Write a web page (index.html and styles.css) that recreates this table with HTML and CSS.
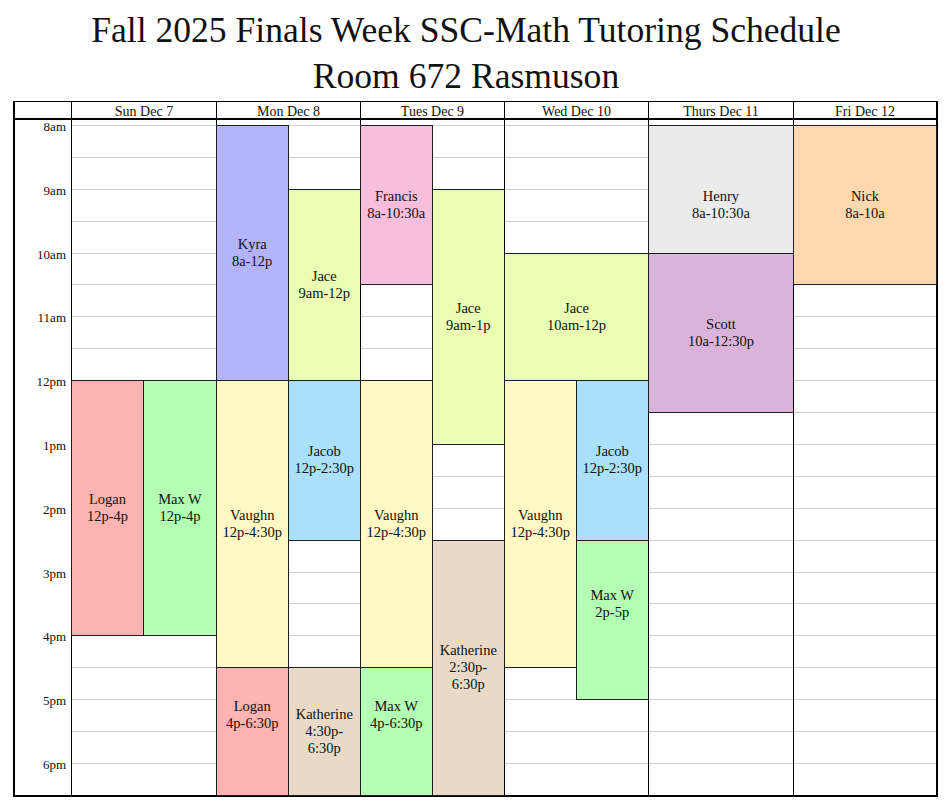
FILE: index.html
```html
<!DOCTYPE html>
<html>
<head>
<meta charset="utf-8">
<link rel="stylesheet" href="styles.css">
</head>
<body>
<h1 class="title">Fall 2025 Finals Week SSC-Math Tutoring Schedule<br>Room 672 Rasmuson</h1>
<div class="sched">
  <div class="hcell first"></div>
  <div class="hcell">Sun Dec 7</div>
  <div class="hcell">Mon Dec 8</div>
  <div class="hcell">Tues Dec 9</div>
  <div class="hcell">Wed Dec 10</div>
  <div class="hcell">Thurs Dec 11</div>
  <div class="hcell">Fri Dec 12</div>

  <div class="times">
    <div class="tl">8am</div>
    <div class="tl">9am</div>
    <div class="tl">10am</div>
    <div class="tl">11am</div>
    <div class="tl">12pm</div>
    <div class="tl">1pm</div>
    <div class="tl">2pm</div>
    <div class="tl">3pm</div>
    <div class="tl">4pm</div>
    <div class="tl">5pm</div>
    <div class="tl">6pm</div>
  </div>

  <div class="col">
    <div class="ev c1 logan" style="grid-row: 9 / 17">Logan<br>12p-4p</div>
    <div class="ev c2 end maxw" style="grid-row: 9 / 17">Max W<br>12p-4p</div>
  </div>

  <div class="col">
    <div class="ev c1 kyra" style="grid-row: 1 / 9">Kyra<br>8a-12p</div>
    <div class="ev c2 end jace" style="grid-row: 3 / 9">Jace<br>9am-12p</div>
    <div class="ev c1 vaughn" style="grid-row: 9 / 18">Vaughn<br>12p-4:30p</div>
    <div class="ev c2 end jacob" style="grid-row: 9 / 14">Jacob<br>12p-2:30p</div>
    <div class="ev c1 up logan" style="grid-row: 18 / 22">Logan<br>4p-6:30p</div>
    <div class="ev c2 end kath" style="grid-row: 18 / 22">Katherine<br>4:30p-<br>6:30p</div>
  </div>

  <div class="col">
    <div class="ev c1 francis" style="grid-row: 1 / 6">Francis<br>8a-10:30a</div>
    <div class="ev c2 end jace" style="grid-row: 3 / 11">Jace<br>9am-1p</div>
    <div class="ev c1 vaughn" style="grid-row: 9 / 18">Vaughn<br>12p-4:30p</div>
    <div class="ev c2 end kath" style="grid-row: 14 / 22">Katherine<br>2:30p-<br>6:30p</div>
    <div class="ev c1 up maxw" style="grid-row: 18 / 22">Max W<br>4p-6:30p</div>
  </div>

  <div class="col">
    <div class="ev full end jace" style="grid-row: 5 / 9">Jace<br>10am-12p</div>
    <div class="ev c1 vaughn" style="grid-row: 9 / 18">Vaughn<br>12p-4:30p</div>
    <div class="ev c2 end jacob" style="grid-row: 9 / 14">Jacob<br>12p-2:30p</div>
    <div class="ev c2 end up maxw" style="grid-row: 14 / 19">Max W<br>2p-5p</div>
  </div>

  <div class="col">
    <div class="ev full end down henry" style="grid-row: 1 / 5">Henry<br>8a-10:30a</div>
    <div class="ev full end scott" style="grid-row: 5 / 10">Scott<br>10a-12:30p</div>
  </div>

  <div class="col">
    <div class="ev full end nick" style="grid-row: 1 / 6">Nick<br>8a-10a</div>
  </div>
</div>
</body>
</html>
```

FILE: styles.css
```css
* { box-sizing: border-box; }

body {
  margin: 0;
  background: #fff;
  color: #111;
  font-family: "Liberation Serif", "DejaVu Serif", "Noto Serif", Times, serif;
}

.title {
  margin: 0;
  width: 932px;
  padding-top: 7px;
  font-family: "Liberation Serif", "DejaVu Serif", "Noto Serif", Times, serif;
  font-size: 35.6px;
  line-height: 46px;
  font-weight: normal;
  text-align: center;
}

.sched {
  margin: 2px 0 0 13px;
  width: 925px;
  display: grid;
  grid-template-columns: 56px 145px 144px 144px 144px 145px 143px;
  grid-template-rows: 18px 675px;
  border: 2px solid #000;
  border-top-width: 1px;
}

.hcell {
  border-bottom: 2px solid #000;
  border-left: 1px solid #000;
  font-size: 14px;
  line-height: 19px;
  text-align: center;
  white-space: nowrap;
}

.hcell.first { border-left: none; }

.times {
  padding-right: 5px;
  display: flex;
  flex-direction: column;
}

.tl {
  flex: none;
  height: 63.8px;
  line-height: 16px;
  font-size: 13px;
  text-align: right;
}

.tl:first-child { margin-top: -1px; }
.tl:last-child { height: 16px; }

.col {
  border-left: 1px solid #000;
  padding-top: 5px;
  display: grid;
  grid-template-columns: 1fr 1fr;
  grid-template-rows: repeat(21, 31.9px);
  background-image: repeating-linear-gradient(to bottom, #cfcfcf 0, #cfcfcf 1px, transparent 1px, transparent 31.9px);
  background-origin: content-box;
}

.ev {
  border: 1px solid #1e1e1e;
  margin: 0 0 -1px -1px;
  display: flex;
  flex-direction: column;
  justify-content: center;
  align-items: center;
  text-align: center;
  font-size: 14.5px;
  line-height: 17px;
  white-space: nowrap;
}

.ev.end { margin-right: -1px; }
.ev.up { padding-bottom: 32px; }
.ev.down { padding-top: 32px; }

.c1 { grid-column: 1; }
.c2 { grid-column: 2; }
.full { grid-column: 1 / 3; }

.kyra { background: #b3b3ff; }
.jace { background: #eaffb3; }
.francis { background: #f7bfdb; }
.henry { background: #ebebeb; }
.nick { background: #ffd8b0; }
.scott { background: #d9b3d9; }
.logan { background: #ffb3b3; }
.maxw { background: #b3ffb3; }
.vaughn { background: #fff9c4; }
.jacob { background: #aae0fa; }
.kath { background: #ead9c6; }
```
